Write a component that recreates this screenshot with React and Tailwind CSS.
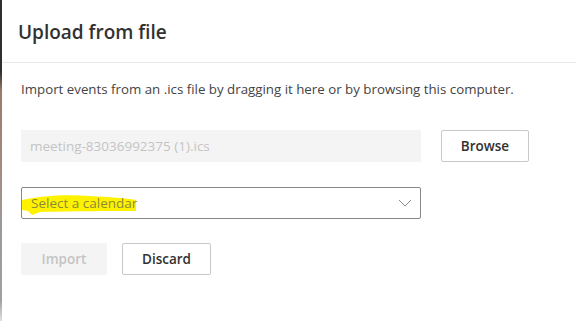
import React from 'react';

const Highlight = () => (
  <svg className="absolute left-[-2px] top-[4px] pointer-events-none" width="120" height="24" viewBox="0 0 120 24">
    <path
      d="M2 8 C 20 4, 45 2, 70 4 C 90 5, 105 6, 116 8 L 116 19 C 95 19, 60 19, 20 20 L 12 23 L 8 19 L 2 18 Z"
      fill="#fff200"
    />
  </svg>
);

const App = () => (
  <div
    className="flex w-full h-[321px] bg-white overflow-hidden"
    style={{ fontFamily: '"Open Sans", "Noto Sans", sans-serif' }}
  >
    <div className="w-[2px] shrink-0 bg-[linear-gradient(to_bottom,#2f2f2f_0px,#2f2f2f_72px,#9a7a6a_90px,#a58e84_180px,#9a9a9a_230px,#a0a0a0_300px,#e0e0e0_321px)]" />
    <div className="flex-1 flex flex-col">
      <div className="h-[63px] border-b border-[#eaeaea] pl-[16px] flex items-center">
        <h2 className="text-[19px] font-semibold text-[#323130] pt-[2px]">Upload from file</h2>
      </div>
      <div className="pl-[19px] pt-[16px]">
        <p className="text-[13.3px] text-[#444] leading-5">
          Import events from an .ics file by dragging it here or by browsing this computer.
        </p>
        <div className="flex items-center mt-[31px] gap-[20px]">
          <div className="w-[400px] h-[32px] bg-[#f4f4f4] flex items-center pl-[9px] text-[13.5px] text-[#c4c4c4]">
            meeting-83036992375 (1).ics
          </div>
          <button className="w-[88px] h-[32px] border border-[#c8c8c8] rounded-[2px] text-[13.5px] font-semibold text-[#323130]">
            Browse
          </button>
        </div>
        <div className="relative mt-[25px] w-[400px] h-[32px] border border-[#8a8886] rounded-[2px] flex items-center pl-[9px]">
          <Highlight />
          <span className="relative text-[13.5px] text-[#8a8a3a]">Select a calendar</span>
          <svg className="absolute right-[8px] top-[10px]" width="14" height="10" viewBox="0 0 14 10">
            <path d="M1 2 L7 8 L13 2" fill="none" stroke="#8a8a8a" strokeWidth="1" />
          </svg>
        </div>
        <div className="flex mt-[24px] gap-[15px]">
          <button className="w-[86px] h-[32px] bg-[#f4f4f4] rounded-[2px] text-[13.5px] font-semibold text-[#c4c4c4]">
            Import
          </button>
          <button className="w-[89px] h-[32px] border border-[#c8c8c8] rounded-[2px] text-[13.5px] font-semibold text-[#323130]">
            Discard
          </button>
        </div>
      </div>
    </div>
  </div>
);

export default App;
